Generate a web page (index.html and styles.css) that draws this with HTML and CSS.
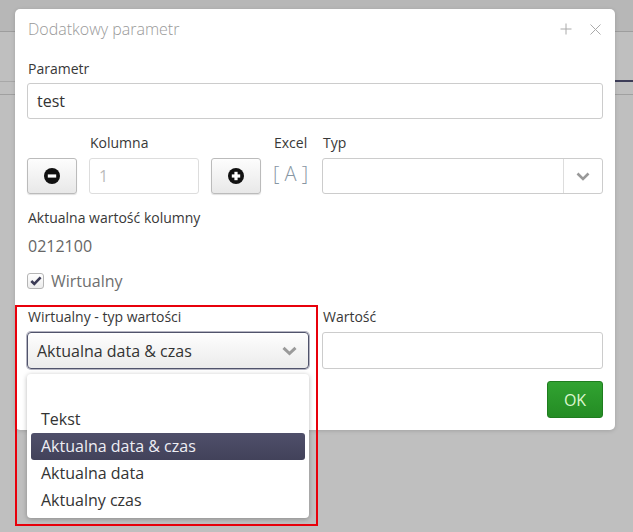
FILE: index.html
```html
<!DOCTYPE html>
<html lang="pl">
<head>
    <meta charset="UTF-8">
    <title>Dodatkowy parametr</title>
<link rel="stylesheet" href="styles.css">
</head>
<body>

    <!-- tło strony pod oknem -->
    <div class="bg-top"></div>
    <div class="bg-tabs"><div class="bg-tab-active"></div></div>
    <div class="bg-bar"></div>

    <div class="modal">
        <div class="modal-head">
            <span class="modal-title">Dodatkowy parametr</span>
            <div class="modal-tools">
                <svg width="12" height="12" viewBox="0 0 12 12"><path d="M6 0.5V11.5M0.5 6H11.5" stroke="#aaa" stroke-width="1" fill="none"/></svg>
                <svg width="11" height="11" viewBox="0 0 11 11"><path d="M0.5 0.5L10.5 10.5M10.5 0.5L0.5 10.5" stroke="#aaa" stroke-width="1" fill="none"/></svg>
            </div>
        </div>

        <div class="modal-body">
            <label class="lbl">Parametr</label>
            <div class="field">test</div>

            <div class="col-grid">
                <span></span>
                <label class="lbl">Kolumna</label>
                <span></span>
                <label class="lbl">Excel</label>
                <label class="lbl">Typ</label>

                <button class="btn-step">
                    <svg width="16" height="16" viewBox="0 0 16 16"><circle cx="8" cy="8" r="8" fill="#111"/><rect x="3.8" y="6.4" width="8.4" height="3.2" fill="#fff"/></svg>
                </button>
                <div class="field field-num">1</div>
                <button class="btn-step">
                    <svg width="16" height="16" viewBox="0 0 16 16"><circle cx="8" cy="8" r="8" fill="#111"/><rect x="3.8" y="6.4" width="8.4" height="3.2" fill="#fff"/><rect x="6.4" y="3.8" width="3.2" height="8.4" fill="#fff"/></svg>
                </button>
                <span class="excel">[ A ]</span>
                <div class="select-typ">
                    <span class="select-typ-val"></span>
                    <span class="select-typ-arrow">
                        <svg width="14" height="9" viewBox="0 0 14 9"><path d="M1.5 1.5L7 7L12.5 1.5" stroke="#999" stroke-width="2.6" fill="none"/></svg>
                    </span>
                </div>
            </div>

            <label class="lbl lbl-current">Aktualna wartość kolumny</label>
            <div class="value">0212100</div>

            <div class="check-row">
                <span class="checkbox">
                    <svg width="12" height="10" viewBox="0 0 12 10"><path d="M1.3 5L4.3 8L10.6 1.4" stroke="#3b3b56" stroke-width="2.6" fill="none"/></svg>
                </span>
                <span>Wirtualny</span>
            </div>

            <div class="virt-grid">
                <div>
                    <label class="lbl">Wirtualny - typ wartości</label>
                    <div class="select-wrap">
                        <div class="select-open">
                            <span>Aktualna data &amp; czas</span>
                            <svg width="15" height="10" viewBox="0 0 15 10"><path d="M1.5 1.8L7.5 7.5L13.5 1.8" stroke="#9a9a9a" stroke-width="3" fill="none"/></svg>
                        </div>
                        <ul class="dropdown">
                            <li>&nbsp;</li>
                            <li>Tekst</li>
                            <li class="active">Aktualna data &amp; czas</li>
                            <li>Aktualna data</li>
                            <li>Aktualny czas</li>
                        </ul>
                    </div>
                </div>
                <div>
                    <label class="lbl">Wartość</label>
                    <div class="field field-val"></div>
                    <div class="modal-foot">
                        <button class="btn-ok">OK</button>
                    </div>
                </div>
            </div>
        </div>
    </div>

    <!-- zaznaczenie na zrzucie -->
    <div class="highlight-box"></div>

</body>
</html>
```
FILE: styles.css
```css
body {
    margin: 0;
    background-color: #bfbfbf;
    font-family: "Open Sans", sans-serif;
    font-size: 14px;
    color: #333;
}

/* Tło aplikacji */
.bg-top {
    height: 31px;
    background-color: #b7b7b7;
    border-bottom: 1px solid #9d9d9d;
}
.bg-tabs {
    height: 49px;
    display: flex;
    justify-content: flex-end;
    border-bottom: 1px solid #a8a8a8;
}
.bg-tab-active {
    width: 140px;
    border-bottom: 2px solid #3d3d58;
    margin-bottom: -1px;
}
.bg-bar {
    height: 12px;
    border-bottom: 1px solid #a0a0a0;
}

/* Okno */
.modal {
    position: absolute;
    top: 9px;
    left: 15px;
    width: 600px;
    height: 421px;
    box-sizing: border-box;
    padding: 8px 12px 12px 12px;
    background-color: #fff;
    border-radius: 5px;
    box-shadow: 0 1px 4px rgba(0, 0, 0, 0.15);
}
.modal-head {
    display: flex;
    justify-content: space-between;
    align-items: center;
    height: 24px;
}
.modal-title {
    font-size: 16px;
    font-weight: 300;
    line-height: 24px;
    color: #999;
    padding-left: 1px;
}
.modal-tools {
    display: flex;
    align-items: center;
    gap: 18px;
    padding-right: 2px;
}
.modal-tools svg {
    display: block;
}

.modal-body {
    padding-top: 18px;
}

.lbl {
    display: block;
    line-height: 20px;
    margin-bottom: 4px;
    padding-left: 1px;
    color: #383838;
}

.field {
    height: 36px;
    box-sizing: border-box;
    border: 1px solid #ccc;
    border-radius: 3px;
    padding: 0 9px;
    font-size: 16px;
    line-height: 34px;
    color: #333;
}

.col-grid {
    display: grid;
    grid-template-columns: 50px 110px 50px 37px 1fr;
    column-gap: 12px;
    margin-top: 14px;
}
.col-grid .lbl {
    margin-bottom: 5px;
}
.btn-step {
    height: 36px;
    padding: 0;
    border: 1px solid #bbb;
    border-radius: 3px;
    background: linear-gradient(#fdfdfd, #e8e8e8);
    box-shadow: 0 1px 1px rgba(0, 0, 0, 0.12);
    display: flex;
    align-items: center;
    justify-content: center;
}
.btn-step svg {
    display: block;
}
.field-num {
    border-color: #ddd;
    color: #bbb;
}
.excel {
    font-size: 20px;
    font-weight: 300;
    line-height: 32px;
    color: #8796a3;
    white-space: nowrap;
}
.select-typ {
    height: 36px;
    box-sizing: border-box;
    border: 1px solid #ccc;
    border-radius: 3px;
    display: flex;
}
.select-typ-val {
    flex: 1;
}
.select-typ-arrow {
    width: 38px;
    border-left: 1px solid #ddd;
    display: flex;
    align-items: center;
    justify-content: center;
}

.lbl-current {
    margin-top: 14px;
    margin-bottom: 7px;
}
.value {
    font-size: 16px;
    line-height: 22px;
    color: #666;
    padding-left: 1px;
}

.check-row {
    display: flex;
    align-items: center;
    gap: 7px;
    margin-top: 13px;
    font-size: 16px;
    line-height: 22px;
    color: #6f6f6f;
}
.checkbox {
    width: 17px;
    height: 16px;
    box-sizing: border-box;
    border: 1px solid #b5b5b5;
    border-radius: 3px;
    background: linear-gradient(#fff, #ececec);
    display: flex;
    align-items: center;
    justify-content: center;
}

.virt-grid {
    display: grid;
    grid-template-columns: 282px 1fr;
    column-gap: 13px;
    margin-top: 15px;
}
.virt-grid .lbl {
    margin-bottom: 5px;
}
.select-wrap {
    position: relative;
}
.select-open {
    height: 37px;
    box-sizing: border-box;
    border: 1px solid #50536b;
    border-radius: 4px;
    box-shadow: 0 0 0 1px rgba(90, 92, 120, 0.45);
    background: linear-gradient(#fefefe, #ebebeb);
    display: flex;
    align-items: center;
    justify-content: space-between;
    padding: 0 11px 0 9px;
    font-size: 16px;
    color: #333;
}
.field-val {
    height: 37px;
}
.modal-foot {
    display: flex;
    justify-content: flex-end;
    margin-top: 12px;
}
.btn-ok {
    width: 56px;
    height: 37px;
    border: 1px solid #1f7d1f;
    border-radius: 3px;
    background: linear-gradient(#31a331, #248c24);
    color: #dcf7cf;
    font-family: "Open Sans", sans-serif;
    font-size: 16px;
    padding: 0;
}

/* Otwarta lista */
.dropdown {
    position: absolute;
    left: 0;
    right: 0;
    top: calc(100% + 5px);
    margin: 0;
    padding: 5px 4px 4px 4px;
    list-style: none;
    background-color: #fff;
    border-radius: 4px;
    box-shadow: 0 1px 5px rgba(0, 0, 0, 0.28);
    font-size: 16px;
    color: #333;
}
.dropdown li {
    line-height: 27px;
    padding-left: 10px;
    border-radius: 3px;
}
.dropdown li.active {
    background: linear-gradient(#4f4f6a, #42425a);
    color: #eeeef4;
}

/* Czerwona ramka z adnotacji */
.highlight-box {
    position: absolute;
    left: 15px;
    top: 305px;
    width: 299px;
    height: 217px;
    border: 2px solid #e8000b;
    pointer-events: none;
}
```
